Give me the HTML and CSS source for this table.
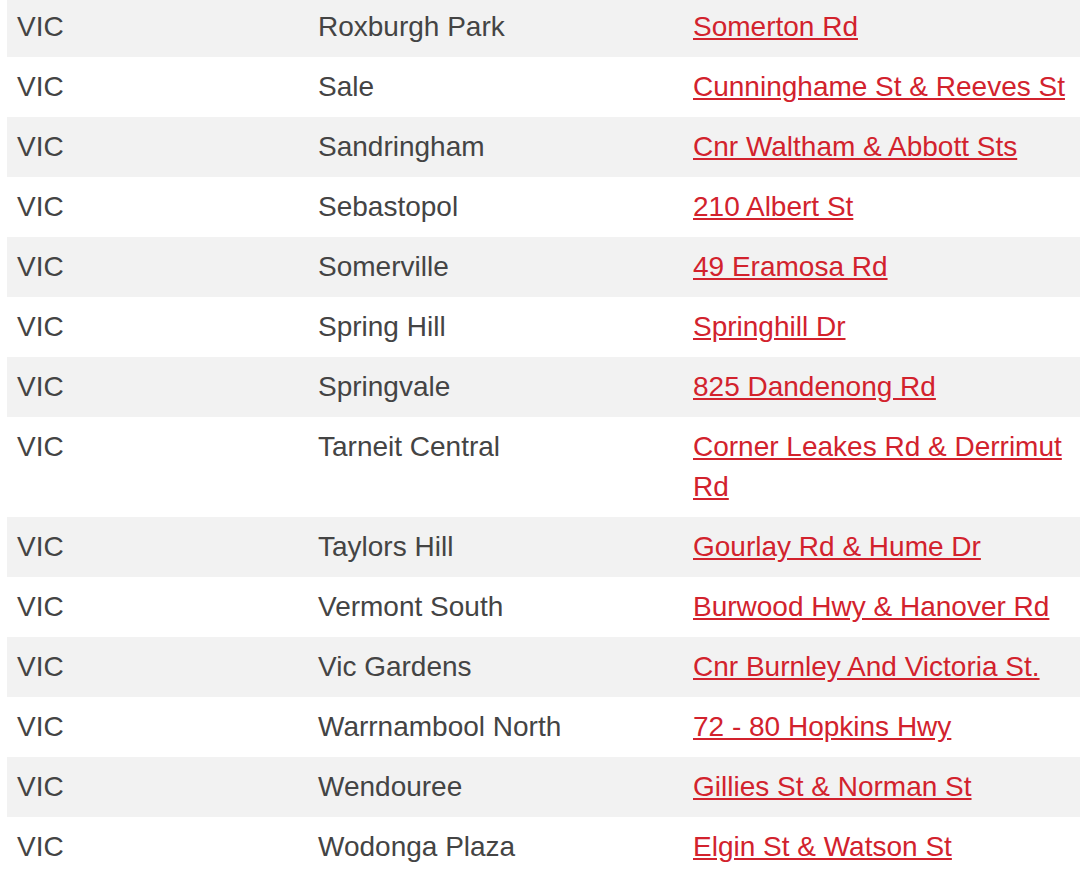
FILE: index.html
```html
<!DOCTYPE html>
<html>
<head>
<meta charset="utf-8">
<link rel="stylesheet" href="styles.css">
</head>
<body>
<div class="wrap">
<table class="stores">
  <colgroup><col class="c1"><col class="c2"><col class="c3"></colgroup>
  <tbody>
    <tr><td>VIC</td><td>Roxburgh Park</td><td><a href="#">Somerton Rd</a></td></tr>
    <tr><td>VIC</td><td>Sale</td><td><a href="#">Cunninghame St &amp; Reeves St</a></td></tr>
    <tr><td>VIC</td><td>Sandringham</td><td><a href="#">Cnr Waltham &amp; Abbott Sts</a></td></tr>
    <tr><td>VIC</td><td>Sebastopol</td><td><a href="#">210 Albert St</a></td></tr>
    <tr><td>VIC</td><td>Somerville</td><td><a href="#">49 Eramosa Rd</a></td></tr>
    <tr><td>VIC</td><td>Spring Hill</td><td><a href="#">Springhill Dr</a></td></tr>
    <tr><td>VIC</td><td>Springvale</td><td><a href="#">825 Dandenong Rd</a></td></tr>
    <tr><td>VIC</td><td>Tarneit Central</td><td><a href="#">Corner Leakes Rd &amp; Derrimut Rd</a></td></tr>
    <tr><td>VIC</td><td>Taylors Hill</td><td><a href="#">Gourlay Rd &amp; Hume Dr</a></td></tr>
    <tr><td>VIC</td><td>Vermont South</td><td><a href="#">Burwood Hwy &amp; Hanover Rd</a></td></tr>
    <tr><td>VIC</td><td>Vic Gardens</td><td><a href="#">Cnr Burnley And Victoria St.</a></td></tr>
    <tr><td>VIC</td><td>Warrnambool North</td><td><a href="#">72 - 80 Hopkins Hwy</a></td></tr>
    <tr><td>VIC</td><td>Wendouree</td><td><a href="#">Gillies St &amp; Norman St</a></td></tr>
    <tr><td>VIC</td><td>Wodonga Plaza</td><td><a href="#">Elgin St &amp; Watson St</a></td></tr>
  </tbody>
</table>
</div>
</body>
</html>
```

FILE: styles.css
```css
html, body {
  margin: 0;
  padding: 0;
  background: #ffffff;
  overflow: hidden;
}
.wrap {
  margin-top: -3px;
  padding-left: 7px;
}
.stores {
  border-collapse: collapse;
  table-layout: fixed;
  width: 1073px;
  font-family: "Liberation Sans", Arial, sans-serif;
  font-size: 28px;
  line-height: 40px;
  color: #444444;
}
.c1 { width: 301px; }
.c2 { width: 375px; }
.c3 { width: 397px; }
.stores td {
  padding: 10px 10px;
  vertical-align: top;
  text-align: left;
}
.stores tr:nth-child(odd) td {
  background: #f2f2f2;
}
.stores a {
  color: #d2222d;
  text-decoration: underline;
}
```
